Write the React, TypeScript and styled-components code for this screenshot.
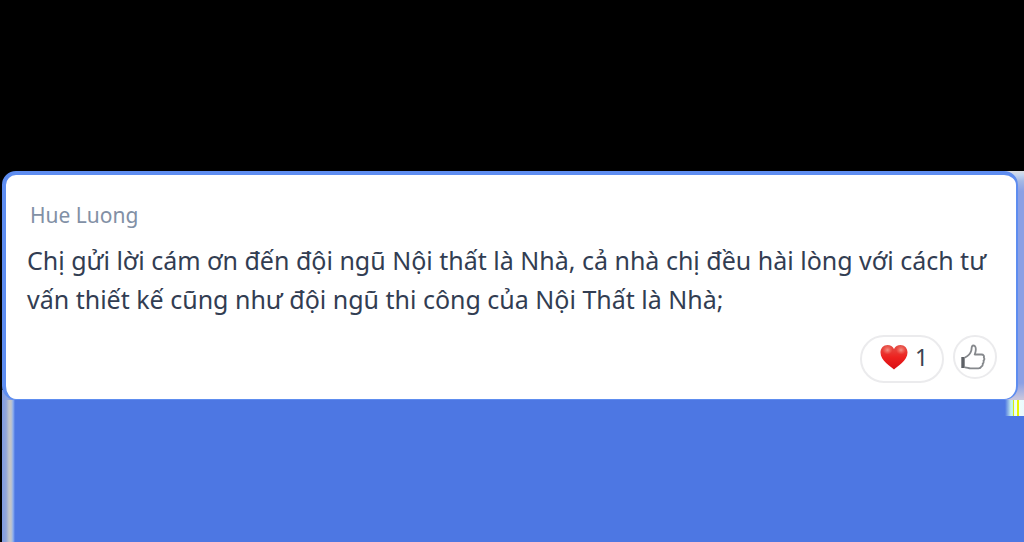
import React from 'react';
import styled, { createGlobalStyle } from 'styled-components';

const GlobalStyle = createGlobalStyle`
  *, *::before, *::after { box-sizing: border-box; }
  body {
    margin: 0;
    background: #000;
    font-family: 'Noto Sans', 'Open Sans', sans-serif;
  }
`;

const Page = styled.main`
  display: flex;
  flex-direction: column;
  min-height: 100vh;
  padding: 171px 0 0 2px;
`;

const MessageRow = styled.div`
  display: flex;
  background:
    linear-gradient(90deg, #7f9be2 0, #8ea3dc 6px, #6d8fe3 12px, #4d77e3 14px) left bottom / 20px 10px no-repeat,
    linear-gradient(#dcdde0 0, #c5d5ee 4px, #a4b8e4 10px, #8ba0e4 20px, #8ba0e4 212px, #c9c6dd 228px) right top / 20px 100% no-repeat;
`;

const Card = styled.article`
  flex: 1;
  display: flex;
  flex-direction: column;
  margin-right: 6px;
  padding: 26px 19px 16px 21px;
  border: solid #5e8df0;
  border-width: 4px 2px 1px 4px;
  border-radius: 14px;
  background: #fff;
`;

const Author = styled.h2`
  margin: 0 0 12px 3px;
  font-size: 21px;
  font-weight: 400;
  line-height: 28px;
  color: #8290a5;
`;

const Message = styled.p`
  margin: 0 -10px 0 0;
  font-size: 25px;
  line-height: 39px;
  color: #323d52;
`;

const Reactions = styled.div`
  display: flex;
  justify-content: flex-end;
  align-items: flex-start;
  gap: 9px;
  margin-top: 16px;
`;

const ReactionButton = styled.button<{ $round?: boolean }>`
  display: flex;
  align-items: center;
  justify-content: center;
  gap: 7px;
  width: ${(p) => (p.$round ? '44px' : '84px')};
  height: ${(p) => (p.$round ? '44px' : '48px')};
  padding: ${(p) => (p.$round ? '0 4px 0 0' : '0 0 4px 4px')};
  border: 2px solid #ebebed;
  border-radius: 24px;
  background: #fff;
  font: 23px 'Noto Sans', sans-serif;
  color: #3c4250;
`;

const Floor = styled.div`
  flex: 1;
  min-height: 140px;
  display: flex;
  justify-content: flex-end;
  background:
    linear-gradient(90deg, #7f9be2 0, #91a5d9 4px, #bfc3cb 7px, #c3c5c8 9px, #8fb0ee 11px, #4d77e3 13px) left / 13px 100% no-repeat,
    #4d77e3;
`;

const ColourBars = styled.div`
  width: 19px;
  height: 16px;
  background: linear-gradient(90deg,
    #4d77e3 0, #9dc4e8 4px, #c4f5ee 6px, #b8eef5 8px,
    #d4ef10 8px, #d4ef10 9px, #e8fcf0 9px, #f6fff4 12px,
    #e4f800 12px, #e4f800 14px, #effcfa 14px, #e9faff 19px);
`;

const Heart = () => (
  <svg width="28" height="26" viewBox="0 0 28 26" aria-hidden="true">
    <defs>
      <linearGradient id="heart" x1="0" y1="0" x2="0" y2="1">
        <stop offset="0" stopColor="#e4524a" />
        <stop offset="0.5" stopColor="#ed221f" />
        <stop offset="1" stopColor="#d90c13" />
      </linearGradient>
      <radialGradient id="shine">
        <stop offset="0" stopColor="#f5a79c" stopOpacity="0.8" />
        <stop offset="1" stopColor="#ff8070" stopOpacity="0" />
      </radialGradient>
    </defs>
    <path
      d="M14 25.500C11 22.500 .5 17 .5 8.500C.5 4 3.500 1 7.500 1C10.500 1 12.800 2.500 14 5C15.200 2.500 17.500 1 20.500 1C24.500 1 27.500 4 27.500 8.500C27.500 17 17 22.500 14 25.500Z"
      fill="url(#heart)"
    />
    <ellipse cx="7.500" cy="6" rx="5" ry="4.500" fill="url(#shine)" />
    <ellipse cx="21" cy="6" rx="5" ry="4.500" fill="url(#shine)" />
  </svg>
);

const ThumbUp = () => (
  <svg
    width="26" height="28" viewBox="0 0 26 28" fill="none"
    stroke="#85888c" strokeWidth="1.800" strokeLinejoin="round" strokeLinecap="round" aria-hidden="true"
  >
    <path d="M3 14V25" stroke="#5d6166" strokeWidth="3.400" strokeLinecap="butt" />
    <path d="M5 14.500C8 13 10.500 10.500 11.300 7.500C11.800 5.500 11.200 2.500 13.300 2.500C15.600 2.500 15.900 5 15.800 7C15.700 8.700 15.200 10 14.700 11.500H21.500C23.600 11.500 24.400 13 23.800 14.500C24.500 15.500 24.300 17 23.500 17.700C23.900 19 23.500 20 22.700 20.700C23 22 22.300 23.200 21.300 23.600C20.800 24.900 19.700 25.300 18.500 25.300H10.500C8.300 25.300 7.500 24.300 5 24.300" />
  </svg>
);

export default function App() {
  return (
    <>
      <GlobalStyle />
      <Page>
        <MessageRow>
          <Card>
            <Author>Hue Luong</Author>
            <Message>
              Chị gửi lời cám ơn đến đội ngũ Nội thất là Nhà, cả nhà chị đều hài lòng với cách tư
              vấn thiết kế cũng như đội ngũ thi công của Nội Thất là Nhà;
            </Message>
            <Reactions>
              <ReactionButton type="button">
                <Heart />
                1
              </ReactionButton>
              <ReactionButton type="button" $round aria-label="Thích">
                <ThumbUp />
              </ReactionButton>
            </Reactions>
          </Card>
        </MessageRow>
        <Floor>
          <ColourBars />
        </Floor>
      </Page>
    </>
  );
}
